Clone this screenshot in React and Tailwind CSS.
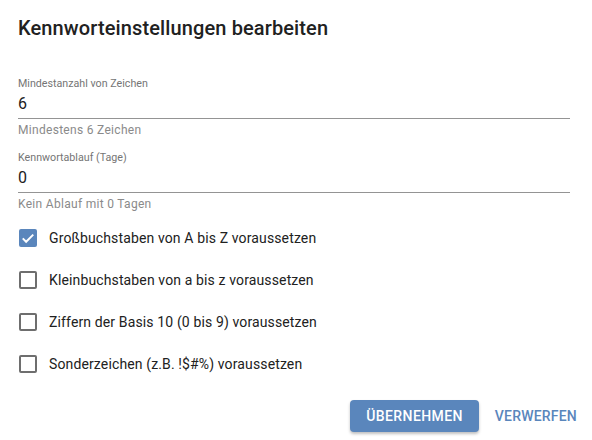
import React, { useState } from 'react';

const Field = ({ label, value, helper }) => (
  <div className="flex flex-col">
    <label className="text-[10.7px] leading-[13px] text-[#757575] mt-[2px]">{label}</label>
    <div className="border-b border-[#949494] pt-[4px] pb-[5px] text-[16px] leading-[19px] text-[#212121]">
      {value}
    </div>
    <p className="mt-[4px] text-[12px] leading-[14px] text-[#8a8a8a] tracking-[0.3px]">{helper}</p>
  </div>
);

const Check = ({ checked, label, onToggle }) => (
  <label className="flex items-center h-[42px] cursor-pointer" onClick={onToggle}>
    <span
      className={
        checked
          ? 'w-[18px] h-[18px] rounded-[2px] bg-[#5a86bc] flex items-center justify-center ml-px'
          : 'w-[18px] h-[18px] rounded-[2px] border-2 border-[#6e6e6e] ml-px'
      }
    >
      {checked && (
        <svg viewBox="0 0 24 24" className="w-[18px] h-[18px]" fill="none" stroke="white" strokeWidth="2.6">
          <path d="M5 12.5l4.5 4.5L19 7.5" />
        </svg>
      )}
    </span>
    <span className="ml-[12px] text-[14px] tracking-[0.13px] text-[#212121]">{label}</span>
  </label>
);

export default function App() {
  const [checks, setChecks] = useState([true, false, false, false]);
  const labels = [
    'Großbuchstaben von A bis Z voraussetzen',
    'Kleinbuchstaben von a bis z voraussetzen',
    'Ziffern der Basis 10 (0 bis 9) voraussetzen',
    'Sonderzeichen (z.B. !$#%) voraussetzen',
  ];
  const toggle = (i) => setChecks(checks.map((c, j) => (j === i ? !c : c)));

  return (
    <div className="w-[592px] h-[440px] bg-white font-['Roboto',sans-serif] overflow-hidden">
      <div className="px-[18px] pt-[16px]">
        <h2 className="text-[20px] leading-[24px] font-medium tracking-[0.12px] text-[#212121]">
          Kennworteinstellungen bearbeiten
        </h2>
      </div>
      <div className="pl-[18px] pr-[22px] pt-[35px] flex flex-col gap-[12px]">
        <Field label="Mindestanzahl von Zeichen" value="6" helper="Mindestens 6 Zeichen" />
        <Field label="Kennwortablauf (Tage)" value="0" helper="Kein Ablauf mit 0 Tagen" />
      </div>
      <div className="pl-[18px] pt-[6px] flex flex-col">
        {labels.map((l, i) => (
          <Check key={l} label={l} checked={checks[i]} onToggle={() => toggle(i)} />
        ))}
      </div>
      <div className="flex justify-end items-center gap-[16px] pr-[15px] pt-[15px]">
        <button className="h-[32px] px-[16px] rounded-[4px] bg-[#5a86bc] text-white text-[14px] font-medium tracking-[0.4px] shadow-[0_2px_3px_rgba(0,0,0,0.25)]">
          ÜBERNEHMEN
        </button>
        <button className="h-[32px] px-0 text-[#5a86bc] text-[14px] font-medium tracking-[0.2px]">
          VERWERFEN
        </button>
      </div>
    </div>
  );
}
